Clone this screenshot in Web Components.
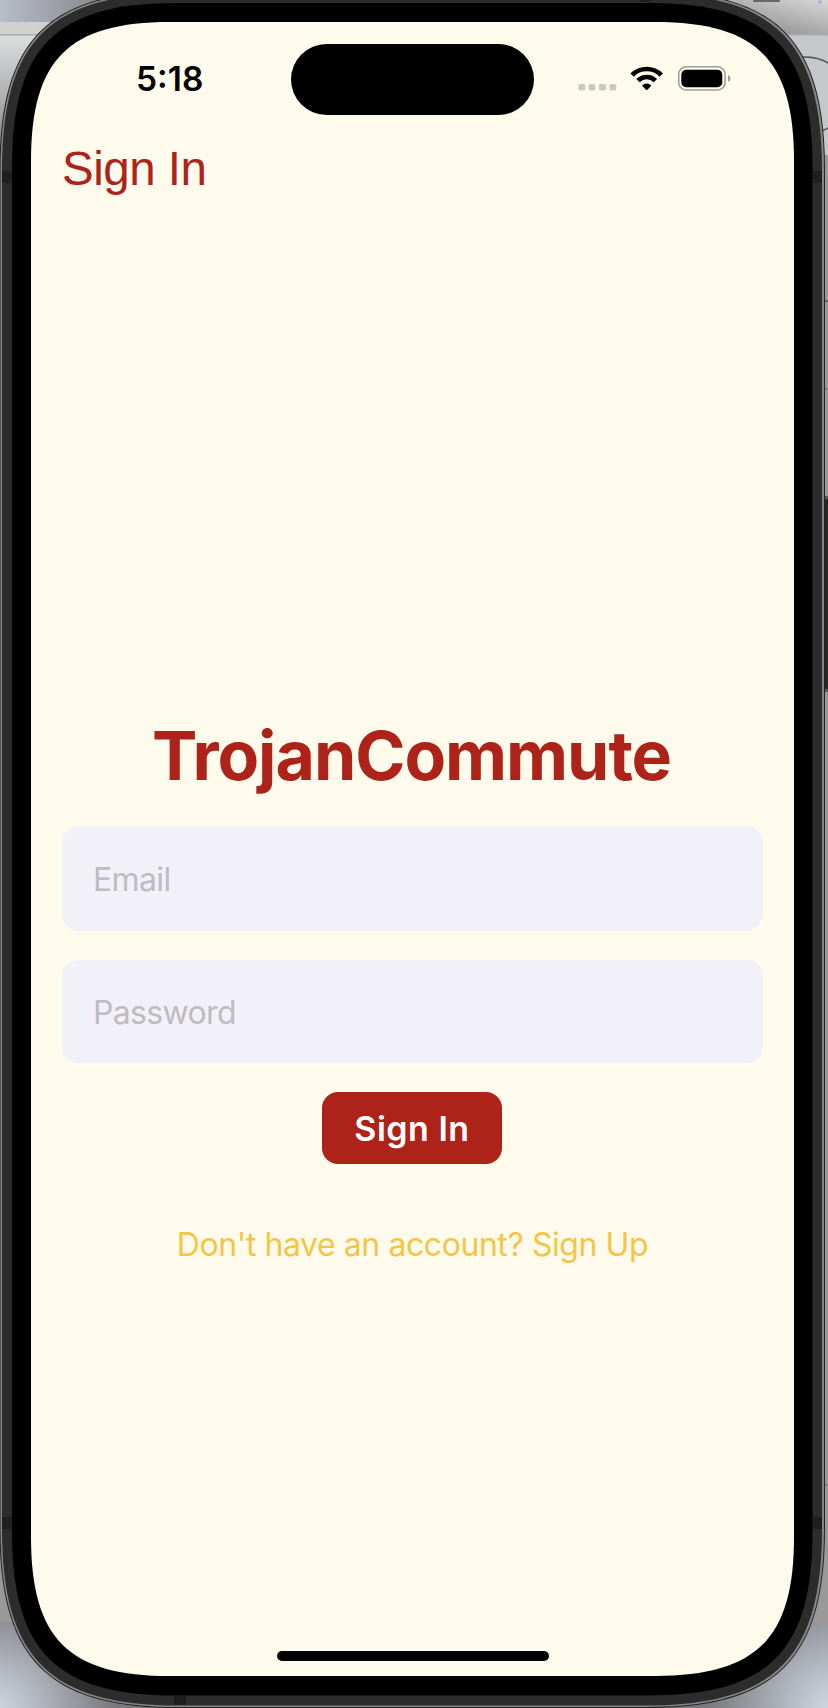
<!DOCTYPE html>
<html lang="en">
<head>
<meta charset="utf-8">
<title>TrojanCommute</title>
<style>
html,body{margin:0;width:828px;height:1708px;overflow:hidden}
body{font-family:Inter,"Liberation Sans",sans-serif}
</style>
</head>
<body>
<phone-device>
  <status-bar time="5:18"></status-bar>
  <nav-title>Sign In</nav-title>
  <sign-in-form>
    <app-title slot="title">TrojanCommute</app-title>
    <text-field style="--h:105px">Email</text-field>
    <text-field style="--h:103px">Password</text-field>
    <primary-button slot="action">Sign In</primary-button>
    <link-text slot="footer">Don't have an account? Sign Up</link-text>
  </sign-in-form>
</phone-device>
<script>
function define(name, html, setup) {
  customElements.define(name, class extends HTMLElement {
    connectedCallback() {
      if (this.shadowRoot) return;
      this.attachShadow({mode: 'open'}).innerHTML = html;
      if (setup) setup(this);
    }
  });
}

/* Rounded rectangle whose corners ease slightly into the straight edges. */
function squircle(x, y, w, h, r) {
  const a = 1.3 * r, c = .35 * r, R = x + w, B = y + h;
  return `M${x+a} ${y}H${R-a}C${R-c} ${y} ${R} ${y+c} ${R} ${y+a}` +
    `V${B-a}C${R} ${B-c} ${R-c} ${B} ${R-a} ${B}` +
    `H${x+a}C${x+c} ${B} ${x} ${B-c} ${x} ${B-a}` +
    `V${y+a}C${x} ${y+c} ${x+c} ${y} ${x+a} ${y}Z`;
}

define('phone-device', `<style>
  :host{display:grid;width:828px;height:1708px;overflow:hidden}
  svg,.screen{grid-area:1/1}
  .screen{margin:22px 34px 32px 31px;display:flex;flex-direction:column;position:relative}
  .home{position:absolute;left:246px;top:1628.5px;width:272px;height:10px;border-radius:5px;background:#000}
  </style>
  <svg width="828" height="1708" viewBox="0 0 828 1708">
    <defs>
      <linearGradient id="tl"><stop stop-color="#b9bdc8"/><stop offset="1" stop-color="#77787c"/></linearGradient>
      <linearGradient id="tr" x1="0" y1="1" x2="1" y2="0"><stop stop-color="#777"/><stop offset="1" stop-color="#d8d8d8"/></linearGradient>
      <linearGradient id="l" x2="0" y2="1"><stop stop-color="#dcdddf"/><stop offset="1" stop-color="#858585"/></linearGradient>
      <radialGradient id="bl" gradientUnits="userSpaceOnUse" cx="-8" cy="1716" r="125"><stop stop-color="#d6dce5"/><stop offset=".4" stop-color="#b1b5bd"/><stop offset="1" stop-color="#77777c"/></radialGradient>
      <radialGradient id="br" gradientUnits="userSpaceOnUse" cx="836" cy="1712" r="130"><stop stop-color="#d6dce5"/><stop offset=".4" stop-color="#b1b5bd"/><stop offset="1" stop-color="#77777c"/></radialGradient>
    </defs>
    <rect width="828" height="1708" fill="#999"/>
    <rect width="130" height="22" fill="url(#tl)"/>
    <rect y="22" width="60" height="13" fill="#d0d0cd"/>
    <rect y="35" width="60" height="120" fill="url(#l)"/>
    <rect y="34" width="60" height="1.5" fill="#aaa"/>
    <rect x="700" width="128" height="35" fill="url(#tr)"/>
    <rect x="780" y="35" width="48" height="120" fill="#c6c7ca"/>
    <path d="M780 34.7H828" stroke="#aaa" stroke-width="1.5"/>
    <path d="M800 57Q820 56 831 65M822 131L830 127" fill="none" stroke="#555" stroke-width="1.5"/>
    <rect x="753" width="27" height="2" rx="1" fill="#666"/><rect x="818" width="4" height="4" rx="2" fill="#a9b5d2"/>
    <rect y="1622" width="190" height="86" fill="url(#bl)"/>
    <rect x="640" y="1622" width="188" height="86" fill="url(#br)"/>
    <path d="M824 301H828" stroke="#555" stroke-width="1.5"/>
    <path d="M824 389H828M824 1485H828" stroke="#777" stroke-width="1.5"/>
    <rect x="824" y="496" width="4" height="196" fill="#5a5a5a"/>
    <rect x="824" y="499" width="4" height="190" fill="#2a2825"/>
    <g id="body"></g>
    <g fill="#1f1f1f"><rect x="2" y="171" width="9.5" height="12"/><rect x="813" y="171" width="9" height="12"/><rect x="2" y="1517" width="9.5" height="12"/><rect x="813" y="1517" width="9" height="12"/><rect x="174" y="1696" width="12" height="9"/><rect x="640" y="0" width="12" height="2"/></g>
  </svg>
  <div class="screen"><slot></slot><div class="home"></div></div>`, el => {
  const layers = [
    [-.5, -9, 825.5, 1717, 138, '#222'],
    [.5, -8, 823.5, 1715, 137, '#858585'],
    [2, -6.5, 820, 1712, 136, '#2c2c2c'],
    [12, 3, 800.5, 1692.5, 126, '#000'],
    [31, 22, 763, 1654, 107, '#fffbec']
  ];
  el.shadowRoot.getElementById('body').innerHTML = layers.map(([x, y, w, h, r, c]) => `<path d="${squircle(x, y, w, h, r)}" fill="${c}"/>`).join('');
});

define('status-bar', `<style>
  :host{display:grid;grid-template-columns:260px 243px 260px;height:93px;padding-top:22px;box-sizing:border-box;align-items:start}
  .time{font:600 33.5px/36px Inter,sans-serif;letter-spacing:0;margin:17px 0 0 105px}
  .island{height:71px;border-radius:36px;background:#000}
  svg{display:block}
  </style>
  <div class="time"></div><div class="island"></div>
  <svg width="260" height="71" viewBox="534 44 260 71">
    <g fill="#cbc8bc"><rect x="578.3" y="84" width="7" height="6.5" rx="2"/><rect x="588.5" y="84" width="7" height="6.5" rx="2"/><rect x="598.9" y="84" width="7" height="6.5" rx="2"/><rect x="609.3" y="84" width="7" height="6.5" rx="2"/></g>
    <g fill="none" stroke="#000" stroke-width="4.7"><path d="M632.1 75.1Q638 69 646.7 69Q655.4 69 661.3 75.1"/><path d="M638 80.7Q641.7 77 646.7 77Q651.7 77 655.4 80.7"/></g>
    <path d="M642 85.6Q646.7 81.3 651.4 85.6L647.5 89.7Q646.7 90.4 645.9 89.7Z"/>
    <rect x="678.7" y="66.8" width="46.4" height="23.2" rx="7.5" fill="none" stroke="#a19f95" stroke-width="1.6"/>
    <rect x="681.3" y="69.7" width="41" height="17.6" rx="5"/>
    <path d="M728 75Q730.5 76 730.5 78.4T728 81.8Z" fill="#a19f95"/>
  </svg>`, el => { el.shadowRoot.querySelector('.time').textContent = el.getAttribute('time'); });

define('nav-title', `<style>:host{display:block;padding:24px 0 0 31px;height:64px;font:400 47.5px/60px "Liberation Sans",Arial,sans-serif;letter-spacing:-.5px;color:#ae2319}</style><slot></slot>`);

define('sign-in-form', `<style>
  :host{display:flex;flex-direction:column;align-items:center;margin-top:510px}
  .fields{display:flex;flex-direction:column;gap:29px;margin-top:29px}
  </style><slot name="title"></slot><div class="fields"><slot></slot></div><slot name="action"></slot><slot name="footer"></slot>`);

define('app-title', `<style>:host{display:block;height:84px;font:700 68px/84px Inter,sans-serif;letter-spacing:-1.05px;color:#ae2319;white-space:nowrap;margin-left:-2px}</style><slot></slot>`);

define('text-field', `<style>:host{display:flex;align-items:center;box-sizing:border-box;width:701px;height:var(--h);padding:2px 31px 0;border-radius:16px;background:#f2f1f7;color:#bdbcc1;font:400 32px/40px Inter,sans-serif;letter-spacing:-.65px}</style><slot></slot>`);

define('primary-button', `<style>:host{display:flex;align-items:center;justify-content:center;box-sizing:border-box;width:180px;height:72px;padding-top:2px;margin:29px 1px 0 0;border-radius:16px;background:#ae2319;color:#fff;font:600 34px/40px Inter,sans-serif;letter-spacing:.5px}</style><slot></slot>`);

define('link-text', `<style>:host{display:block;margin-top:61px;font:400 32px/40px Inter,sans-serif;letter-spacing:-.43px;color:#f5c545;white-space:nowrap}</style><slot></slot>`);
</script>
</body>
</html>
